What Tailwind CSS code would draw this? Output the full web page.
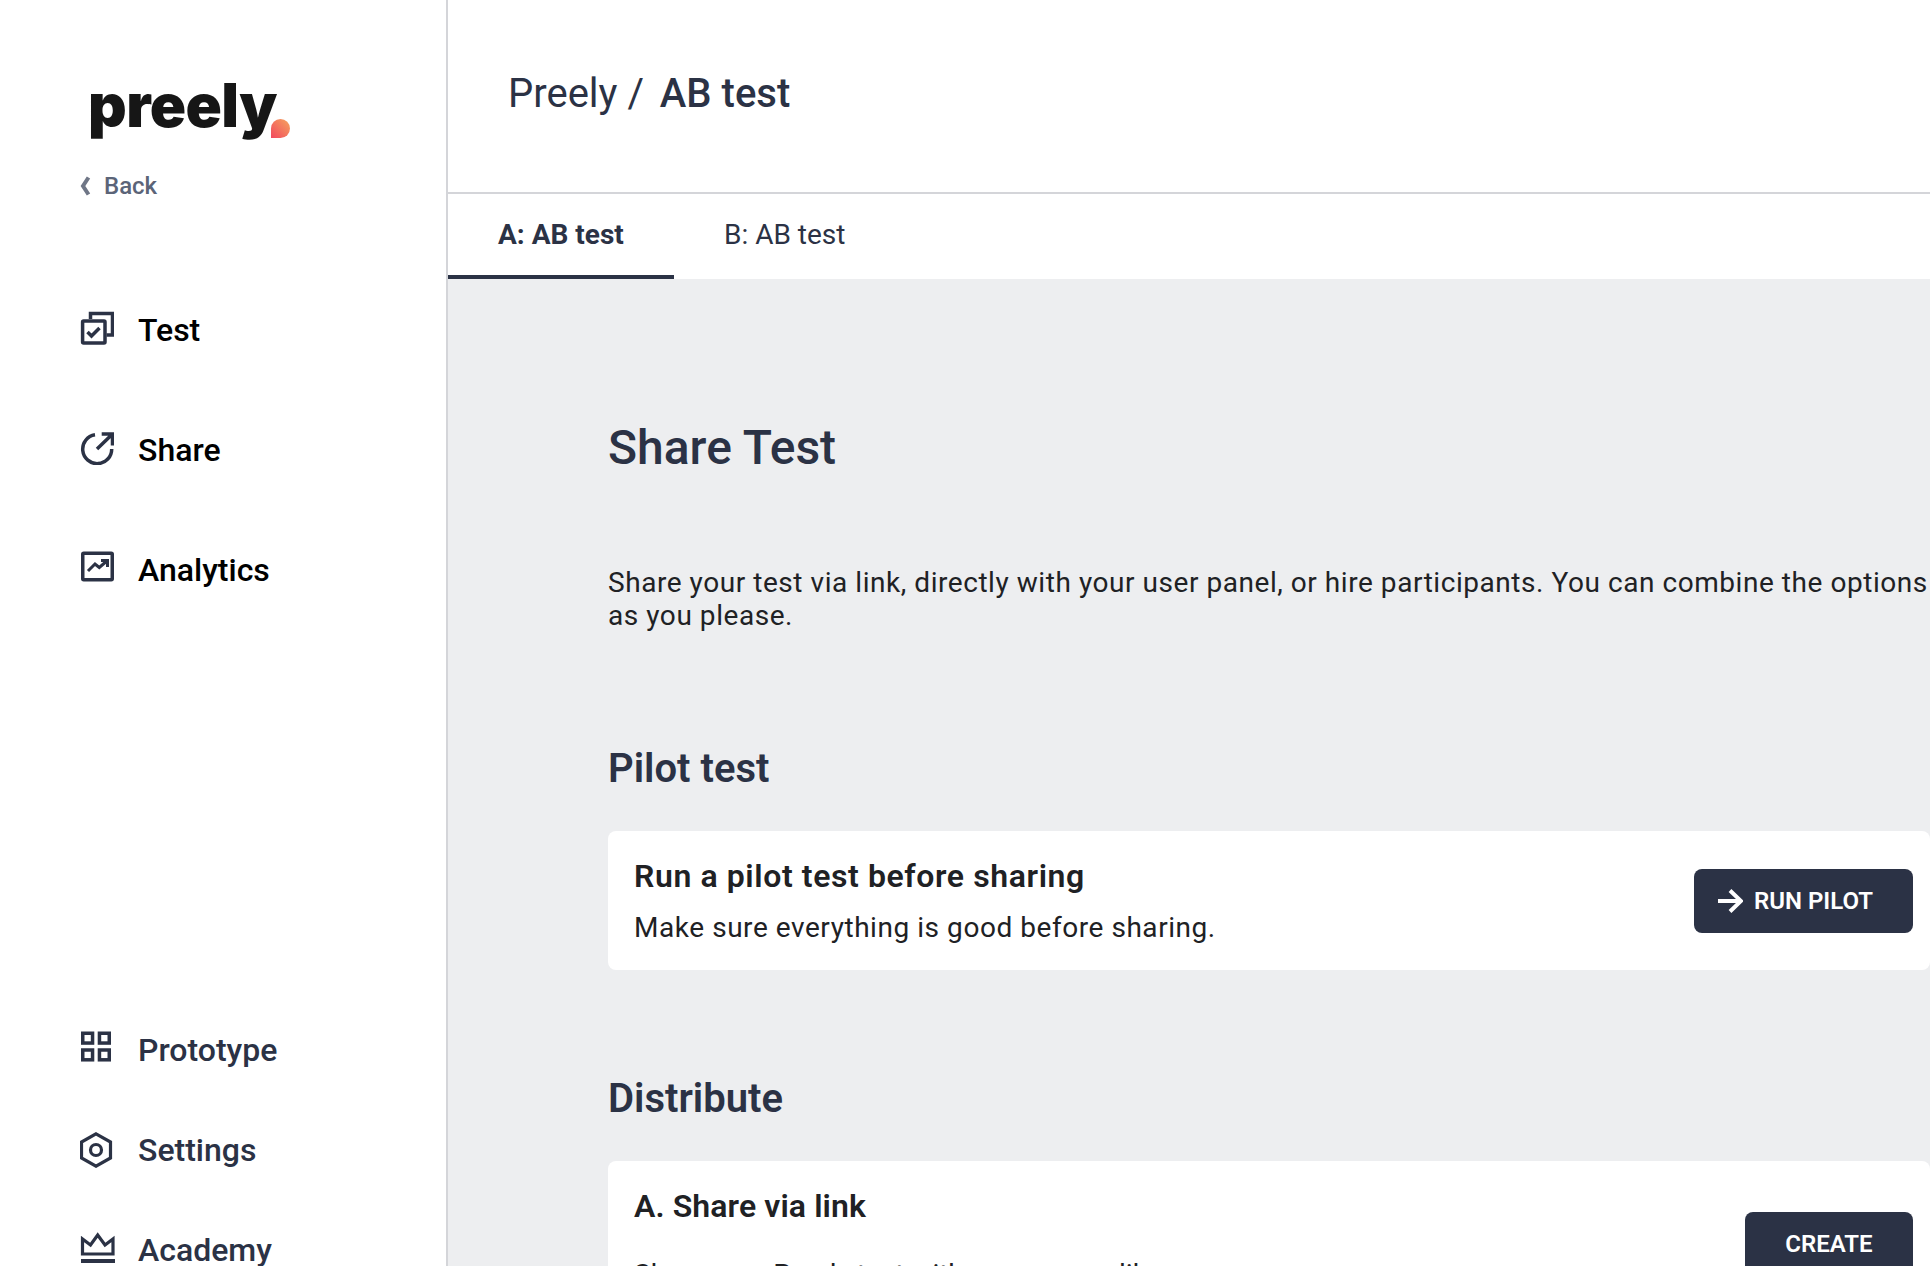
<!DOCTYPE html>
<html lang="en">
<head>
  <meta charset="UTF-8" />
  <title>Share Test | Preely</title>
  <script src="https://cdn.jsdelivr.net/npm/@tailwindcss/browser@4"></script>
</head>
<body class="h-screen overflow-hidden bg-white font-['Roboto',sans-serif] text-[#2b3245]">
  <div class="flex h-[1266px] overflow-hidden">

    <!-- Sidebar -->
    <aside class="w-[448px] h-full shrink-0 border-r-2 border-[#d4d5d9] overflow-hidden">
      <div class="relative pl-[88px] pt-[67px] h-[79px] box-content">
        <span class="block font-['Inter',sans-serif] font-black text-[60px] leading-[76px] tracking-[-0.6px] text-[#161616]">preely</span>
        <svg class="absolute left-[271px] top-[119px]" width="19" height="19" viewBox="0 0 19 19">
          <defs><linearGradient id="drop" x1="0" y1="1" x2="1" y2="0"><stop offset="0" stop-color="#f2495f"/><stop offset="1" stop-color="#f5a55e"/></linearGradient></defs>
          <path d="M0 19V9.500A9.500 9.500 0 1 1 9.500 19Z" fill="url(#drop)"/>
        </svg>
      </div>
      <a href="#" class="flex items-center mt-[26px] ml-[80px] h-[28px] text-[24px] font-medium text-[#5b6478]">
        <svg width="11" height="20" viewBox="0 0 11 20" fill="none" stroke="#6f7686" stroke-width="4"><path d="M8.500 1.500 3 10l5.500 8.500"/></svg>
        <span class="ml-[13px]">Back</span>
      </a>

      <!-- Main nav -->
      <nav class="mt-[70px] ml-[80px] text-black font-medium text-[32px]">
        <a href="#" class="flex items-center h-[120px]">
          <svg class="mr-[24px] mb-[5px]" width="34" height="34" viewBox="0 0 34 34" fill="none" stroke="#2b3245" stroke-width="3.500"><path d="M10.500 8V2.500H32.500V24h-6"/><rect x="2.600" y="10" width="22.400" height="22" rx="1"/><path d="M7.500 21l4 4 8-8"/></svg>
          Test
        </a>
        <a href="#" class="flex items-center h-[120px]">
          <svg class="mr-[24px] mb-[5px]" width="34" height="34" viewBox="0 0 34 34" fill="none" stroke="#2b3245" stroke-width="3.500"><path d="M15 3.800A14.500 14.500 0 1 0 31.700 18"/><path d="M17 18 32 3.500M21.700 3H32.500V14.500"/></svg>
          Share
        </a>
        <a href="#" class="flex items-center h-[120px]">
          <svg class="mr-[24px] mb-[5px]" width="34" height="34" viewBox="0 0 34 34" fill="none" stroke="#2b3245" stroke-width="3.500"><rect x="2.750" y="2.250" width="29.500" height="26.500" rx="1"/><path d="M8 20l7-7 4.300 3.500 7-6M21 9.500h6.500V16" stroke-width="3"/></svg>
          Analytics
        </a>
      </nav>

      <!-- Secondary nav -->
      <nav class="mt-[370px] ml-[80px] font-medium text-[32px]">
        <a href="#" class="flex items-center h-[100px]">
          <svg class="mr-[24px] mb-[5px]" width="34" height="34" viewBox="0 0 34 34" fill="none" stroke="#2b3245" stroke-width="3.500"><rect x="2.750" y="2.250" width="9.800" height="9.800"/><rect x="19.450" y="2.250" width="9.800" height="9.800"/><rect x="2.750" y="19" width="9.800" height="9.800"/><rect x="19.450" y="19" width="9.800" height="9.800"/></svg>
          Prototype
        </a>
        <a href="#" class="flex items-center h-[100px]">
          <svg class="mr-[24px]" width="34" height="36" viewBox="0 0 34 36" fill="none" stroke="#2b3245" stroke-width="3.200"><path d="M16 1.800 30.500 10V26L16 34.200 1.500 26V10Z"/><circle cx="16" cy="18" r="5.500"/></svg>
          Settings
        </a>
        <a href="#" class="flex items-center h-[100px]">
          <svg class="mr-[24px] mb-[4px] overflow-visible" width="34" height="34" viewBox="0 0 34 34" fill="none" stroke="#2b3245" stroke-width="3.200"><path d="M2.500 8V23H33V8L25 14 17.700 4 10.500 14Z"/><path d="M1 30H35" stroke-width="4"/></svg>
          Academy
        </a>
      </nav>
    </aside>

    <!-- Content -->
    <main class="flex-1 min-w-0 h-full overflow-hidden flex flex-col">
      <header class="h-[194px] shrink-0 border-b-2 border-[#d4d5d9] pl-[60px] pt-[66px] text-[40px] leading-[56px]">
        <span class="font-normal">Preely /</span>
        <span class="font-medium ml-[6px]">AB test</span>
      </header>

      <div class="h-[85px] shrink-0 flex text-[28px]">
        <a href="#" class="px-[50px] w-[226px] flex items-center border-b-4 border-[#2b3245] font-bold">A: AB test</a>
        <a href="#" class="px-[50px] flex items-center pb-1 font-normal">B: AB test</a>
      </div>

      <section class="flex-1 bg-[#edeef0] pl-[160px] pt-[136px]">
        <h1 class="text-[48px] leading-[66px] font-medium">Share Test</h1>
        <p class="mt-[85px] w-[1322px] text-[28px] leading-[33px] tracking-[0.55px] text-[#202124]">Share your test via link, directly with your user panel, or hire participants. You can combine the options<br />as you please.</p>

        <h2 class="mt-[109px] text-[40px] leading-[56px] font-semibold">Pilot test</h2>
        <div class="mt-[34px] h-[139px] pl-[26px] pr-[17px] pt-[23px] bg-white rounded-[8px] flex items-start justify-between">
          <div>
            <h3 class="text-[32px] leading-[44px] font-semibold tracking-[0.6px] text-[#202124]">Run a pilot test before sharing</h3>
            <p class="mt-[13px] text-[28px] leading-[34px] tracking-[0.55px] text-[#202124]">Make sure everything is good before sharing.</p>
          </div>
          <button class="w-[219px] h-[64px] mt-[15px] rounded-[8px] bg-[#2b3245] text-white text-[24px] font-semibold flex items-center pl-[24px]">
            <svg class="mr-[11px]" width="25" height="24" viewBox="0 0 25 24" fill="none" stroke="white" stroke-width="4"><path d="M0 12h23M12 1.500 23 12 12 22.500"/></svg>
            RUN PILOT
          </button>
        </div>

        <h2 class="mt-[101px] text-[40px] leading-[56px] font-semibold">Distribute</h2>
        <div class="mt-[34px] h-[200px] pl-[26px] pr-[17px] pt-[23px] bg-white rounded-[8px] flex items-start justify-between">
          <div>
            <h3 class="text-[32px] leading-[44px] font-semibold tracking-[0.1px] text-[#202124]">A. Share via link</h3>
            <p class="mt-[30px] text-[28px] leading-[34px] text-[#202124]">Share your Preely test with anyone you like.</p>
          </div>
          <button class="w-[168px] h-[64px] mt-[28px] rounded-[8px] bg-[#2b3245] text-white text-[24px] font-semibold">CREATE</button>
        </div>
      </section>
    </main>
  </div>
</body>
</html>
